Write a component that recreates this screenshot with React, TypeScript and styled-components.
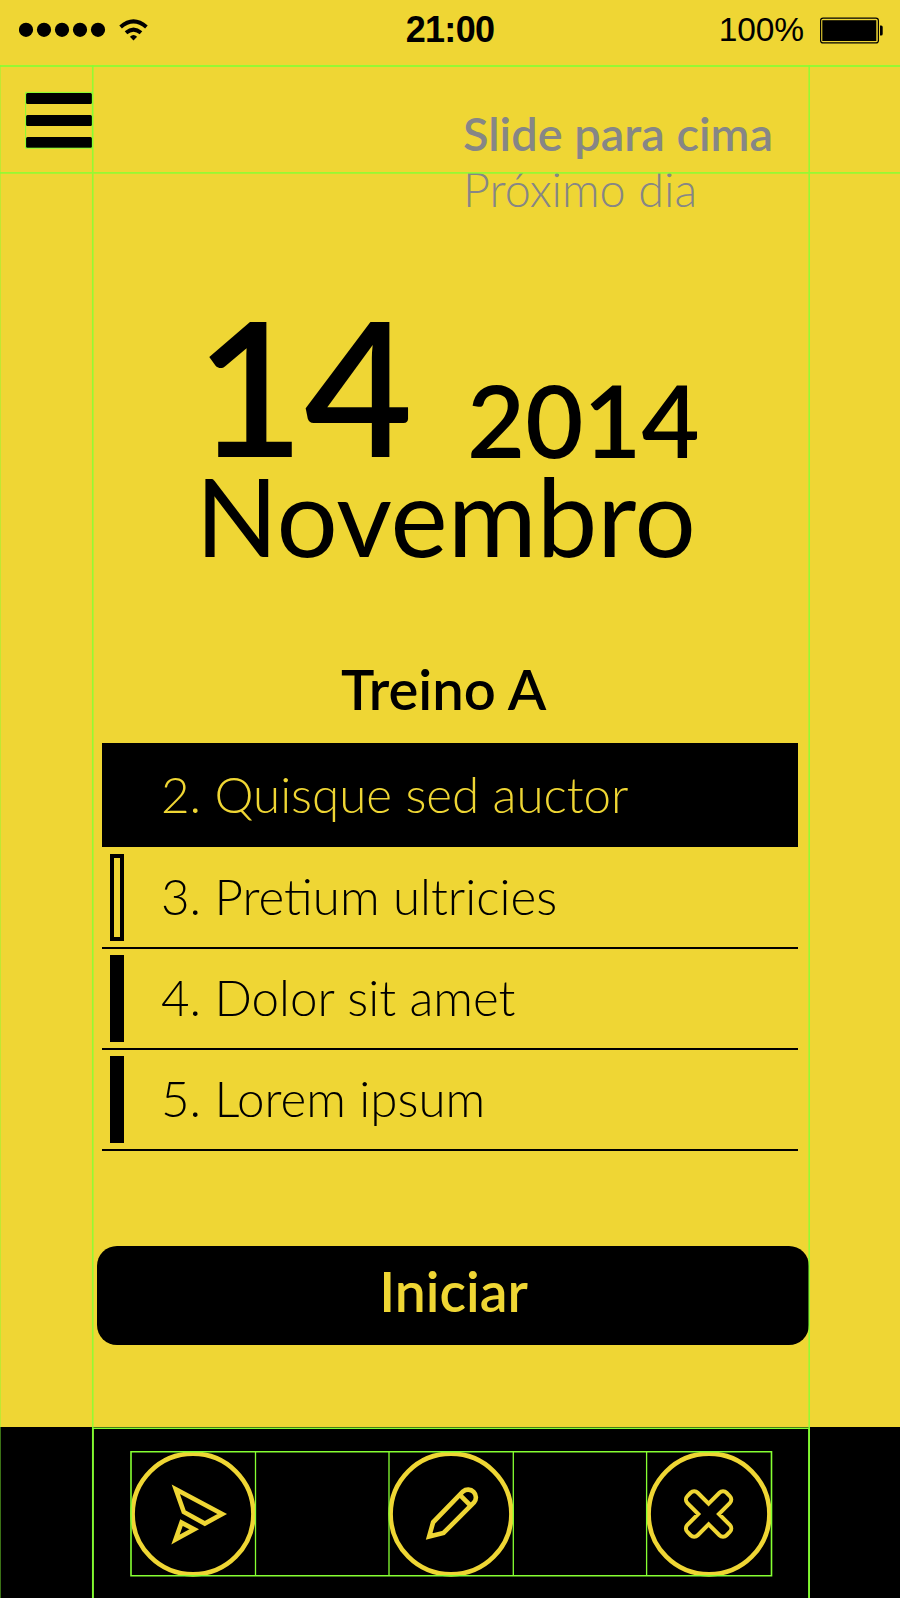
import React from 'react';
import styled, { createGlobalStyle, css } from 'styled-components';

const yellow = '#efd634';
const guide = '#86ff32';

const GlobalStyle = createGlobalStyle`
  body { margin: 0; background: ${yellow}; }
  * { box-sizing: border-box; }
`;

const Screen = styled.main`
  position: relative;
  display: flex;
  flex-direction: column;
  width: 900px;
  height: 1598px;
  overflow: hidden;
  background: ${yellow};
  color: #000;
  font-family: Lato, sans-serif;
`;

const StatusBar = styled.header`
  display: grid;
  grid-template-columns: 1fr auto 1fr;
  align-items: center;
  flex: none;
  height: 65px;
  padding: 0 17px 6px 17px;
  font-family: 'Liberation Sans', sans-serif;
`;

const StatusGroup = styled.div<{ $end?: boolean }>`
  display: flex;
  align-items: center;
  justify-content: ${(p) => (p.$end ? 'flex-end' : 'flex-start')};
`;

const Signal = styled.svg`
  display: block;
  width: 132px;
  height: 30px;
  margin-left: 2px;
`;

const Clock = styled.time`
  font-size: 36px;
  font-weight: 700;
  letter-spacing: -0.7px;
`;

const BatteryLabel = styled.span`
  margin-right: 16px;
  font-size: 33.5px;
  letter-spacing: -0.1px;
`;

const BatteryIcon = styled.svg`
  display: block;
  width: 63px;
  height: 28px;
`;

const TopBar = styled.div`
  display: flex;
  flex: none;
  height: 225px;
  padding: 28px 0 0 26px;
`;

const MenuButton = styled.button`
  display: flex;
  flex-direction: column;
  justify-content: space-between;
  width: 66px;
  height: 55px;
  padding: 0;
  border: 0;
  background: none;
`;

const MenuLine = styled.span`
  height: 11px;
  border-radius: 1.5px;
  background: #000;
`;

const Hint = styled.div`
  margin: 12px 0 0 371px;
  color: #868686;
  white-space: nowrap;
`;

const HintAction = styled.div`
  font-size: 46.9px;
  font-weight: 600;
  line-height: 56px;
`;

const HintTarget = styled.div`
  font-size: 46.7px;
  font-weight: 300;
  line-height: 57px;
`;

const DateBlock = styled.section`
  flex: none;
  height: 369px;
  padding-left: 195.5px;
`;

const DayRow = styled.div`
  display: flex;
  align-items: flex-start;
  height: 174px;
`;

const Day = styled.span`
  width: 271.5px;
  font-size: 187.5px;
  font-weight: 600;
  line-height: 190px;
`;

const Year = styled.span`
  margin-top: 69px;
  font-size: 100.3px;
  font-weight: 600;
  line-height: 120px;
`;

const Month = styled.div`
  font-size: 108.2px;
  line-height: 102px;
`;

const Title = styled.h1`
  flex: none;
  height: 84px;
  margin: 0;
  padding-right: 12.5px;
  font-size: 56.2px;
  font-weight: 600;
  line-height: 60px;
  text-align: center;
`;

const List = styled.ol`
  flex: none;
  width: 696px;
  height: 503px;
  margin: 0 0 0 102px;
  padding: 0;
  list-style: none;
`;

const Row = styled.li<{ $active?: boolean }>`
  display: flex;
  align-items: center;
  height: 101px;
  padding: 0 0 0 8px;
  border-bottom: 2px solid #000;
  font-size: 49.3px;
  font-weight: 300;
  ${(p) =>
    p.$active &&
    css`
      height: 104px;
      margin-bottom: 1px;
      color: ${yellow};
      background: #000;
      border: 0;
    `}
`;

const Marker = styled.span<{ $kind: 'none' | 'outline' | 'solid' }>`
  width: 14px;
  height: 87px;
  margin-right: 37px;
  border: ${(p) => (p.$kind === 'none' ? '0' : '4px solid #000')};
  background: ${(p) => (p.$kind === 'solid' ? '#000' : 'transparent')};
`;

const RowLabel = styled.span`
  padding-bottom: 3px;
  white-space: nowrap;
`;

const StartButton = styled.button`
  flex: none;
  width: 712px;
  height: 99px;
  margin: 0 0 82px 97px;
  padding: 0 0 10px 1px;
  border: 0;
  border-radius: 20px;
  background: #000;
  color: ${yellow};
  font: 600 55.3px/60px Lato, sans-serif;
`;

const Footer = styled.nav`
  display: flex;
  flex: 1;
  justify-content: space-between;
  padding: 23.7px 127.5px 0 130.3px;
  background: #000;
`;

const RoundButton = styled.button`
  width: 126px;
  height: 126px;
  padding: 0;
  border: 0;
  background: none;

  svg {
    display: block;
    fill: none;
    stroke: ${yellow};
    stroke-width: 4.6;
  }
`;

const Guides = styled.svg`
  position: absolute;
  inset: 0;
  pointer-events: none;
  fill: none;
  stroke: ${guide};
  stroke-width: 1.6;
`;

type Item = { label: string; kind: 'none' | 'outline' | 'solid' };

const items: Item[] = [
  { label: '2. Quisque sed auctor', kind: 'none' },
  { label: '3. Pretium ultricies', kind: 'outline' },
  { label: '4. Dolor sit amet', kind: 'solid' },
  { label: '5. Lorem ipsum', kind: 'solid' },
];

const Round = ({ label, children }: { label: string; children: React.ReactNode }) => (
  <RoundButton aria-label={label}>
    <svg width="126" height="126" viewBox="0 0 126 126">
      <circle cx="63" cy="63" r="60.4" />
      {children}
    </svg>
  </RoundButton>
);

export default function App() {
  return (
    <Screen>
      <GlobalStyle />
      <StatusBar>
        <StatusGroup>
          <Signal viewBox="19 14.5 132 30">
            {[26, 44, 62, 80, 98].map((x) => (
              <circle key={x} cx={x} cy="29.3" r="7.1" />
            ))}
            <g fill="none" stroke="#000" strokeWidth="4">
              <path d="M120.6 26.4Q133.5 15.4 146.4 26.4" />
              <path d="M126 32.2Q133.5 26 141 32.2" />
            </g>
            <path d="M129.9 36.2Q133.5 32.6 137.1 36.2L133.5 40Z" />
          </Signal>
        </StatusGroup>
        <Clock>21:00</Clock>
        <StatusGroup $end>
          <BatteryLabel>100%</BatteryLabel>
          <BatteryIcon viewBox="820 15.5 63 28">
            <rect x="820.6" y="17.7" width="57.8" height="24.7" rx="2.5" fill="none" stroke="#000" strokeWidth="1.2" />
            <rect x="822.3" y="19.7" width="54" height="20.8" />
            <path d="M880 25h1.2q1.5 0 1.5 1.5v7q0 1.5-1.5 1.5H880z" />
          </BatteryIcon>
        </StatusGroup>
      </StatusBar>

      <TopBar>
        <MenuButton aria-label="Menu">
          <MenuLine />
          <MenuLine />
          <MenuLine />
        </MenuButton>
        <Hint>
          <HintAction>Slide para cima</HintAction>
          <HintTarget>Próximo dia</HintTarget>
        </Hint>
      </TopBar>

      <DateBlock>
        <DayRow>
          <Day>14</Day>
          <Year>2014</Year>
        </DayRow>
        <Month>Novembro</Month>
      </DateBlock>

      <Title>Treino A</Title>
      <List>
        {items.map((item, i) => (
          <Row key={item.label} $active={i === 0}>
            <Marker $kind={item.kind} />
            <RowLabel>{item.label}</RowLabel>
          </Row>
        ))}
      </List>

      <StartButton>Iniciar</StartButton>

      <Footer>
        <Round label="Enviar">
          <path d="M45.8 38.3L92.2 63L74.8 72.6L53.8 61Z" />
          <path d="M45.5 88.6L64.2 78.3L51.5 71.6Z" />
        </Round>
        <Round label="Editar">
          <path d="M41.1 85.6L45.1 71.3L75 40.5A7.8 7.8 0 0 1 86 51.5L55.5 82Z" />
          <path d="M71.8 43.8L82.5 54.5" />
        </Round>
        <Round label="Fechar">
          <path
            transform="translate(62.6 63) rotate(45)"
            strokeWidth="4"
            d="M-7.3-7.3V-22.7a5 5 0 0 1 5-5h4.6a5 5 0 0 1 5 5V-7.3H22.7a5 5 0 0 1 5 5v4.6a5 5 0 0 1-5 5H7.3V22.7a5 5 0 0 1-5 5h-4.6a5 5 0 0 1-5-5V7.3H-22.7a5 5 0 0 1-5-5v-4.6a5 5 0 0 1 5-5Z"
          />
        </Round>
      </Footer>

      <Guides width="900" height="1598" viewBox="0 0 900 1598">
        <path d="M0 66H900" strokeWidth="2" opacity=".85" />
        <path d="M0 172.9H900M92.75 65V1598M809.2 65V1598" opacity=".85" />
        <path d="M.4 65V1598" strokeWidth="1" opacity=".5" />
        <path d="M25.6 92.4H92.4V148.2H25.6Z" strokeWidth="1" />
        <path d="M93 1598V1428.2H809V1598" />
        <path d="M131 1451.8H771.5V1575.8H131Z" />
        <path d="M255.5 1451V1576M389 1451V1576M513.3 1451V1576M646.6 1451V1576" strokeWidth="1.3" />
      </Guides>
    </Screen>
  );
}
